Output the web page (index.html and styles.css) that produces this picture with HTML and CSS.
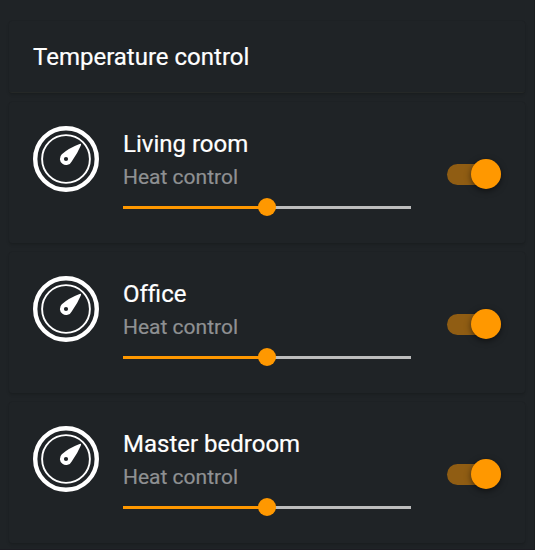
FILE: index.html
```html
<!DOCTYPE html>
<html lang="en">
<head>
<meta charset="utf-8">
<title>Temperature control</title>
<link rel="stylesheet" href="styles.css">
</head>
<body>
<svg class="defs" aria-hidden="true">
  <symbol id="gauge" viewBox="0 0 66 66">
    <circle cx="33" cy="33" r="30.8" fill="none" stroke="#fff" stroke-width="4.4"/>
    <circle cx="33" cy="33" r="23.9" fill="none" stroke="#fff" stroke-width="1.9"/>
    <path fill="#fff" fill-rule="evenodd" d="M47.9 17.9C48.3 18.4 48 19 47.7 19.8Q44.6 27.4 38.7 35.4A6.2 6.2 0 1 1 28.8 28.3Q35.4 22.2 46 18.2C46.8 17.9 47.4 17.5 47.9 17.9ZM33 30.9A2.1 2.1 0 1 0 33 35.1A2.1 2.1 0 1 0 33 30.9Z"/>
  </symbol>
</svg>
<main class="panel">
  <header class="card header"><h1 class="title">Temperature control</h1></header>
  <section class="card room">
    <svg class="icon"><use href="#gauge"/></svg>
    <div class="info">
      <h2 class="title">Living room</h2>
      <p class="subtitle">Heat control</p>
      <div class="slider"><span class="thumb"></span></div>
    </div>
    <div class="switch"><span class="knob"></span></div>
  </section>
  <section class="card room">
    <svg class="icon"><use href="#gauge"/></svg>
    <div class="info">
      <h2 class="title">Of&zwnj;fice</h2>
      <p class="subtitle">Heat control</p>
      <div class="slider"><span class="thumb"></span></div>
    </div>
    <div class="switch"><span class="knob"></span></div>
  </section>
  <section class="card room">
    <svg class="icon"><use href="#gauge"/></svg>
    <div class="info">
      <h2 class="title">Master bedroom</h2>
      <p class="subtitle">Heat control</p>
      <div class="slider"><span class="thumb"></span></div>
    </div>
    <div class="switch"><span class="knob"></span></div>
  </section>
</main>
</body>
</html>
```
FILE: styles.css
```css
* { box-sizing: border-box; }
body {
  margin: 0;
  height: 550px;
  overflow: hidden;
  background: #1f2326;
  font-family: Roboto, sans-serif;
  border-right: 1px solid #1b1e20;
  border-bottom: 1px solid #1c1c22;
}
.defs { display: block; width: 0; height: 0; }
.panel {
  display: flex;
  flex-direction: column;
  gap: 9px;
  width: 535px;
  padding: 21px 10px 0 9px;
}
.card {
  background: #1f2326;
  border-radius: 3px;
  box-shadow: 0 2px 3px rgba(0, 0, 0, .13), 0 0 1px rgba(0, 0, 0, .12);
}
.header {
  height: 72px;
  padding: 21px 24px 0;
  border-bottom: 1px solid #252827;
}
.title {
  margin: 0;
  font-size: 24px;
  line-height: 30px;
  font-weight: 400;
  color: #fff;
  -webkit-text-stroke: .2px;
}
.room {
  display: flex;
  align-items: flex-start;
  height: 141px;
  padding: 24px;
}
.icon { flex: none; width: 66px; height: 66px; }
.info { width: 288px; margin-left: 24px; padding-top: 3px; }
.subtitle {
  margin: 3px 0 0;
  font-size: 21px;
  line-height: 30px;
  color: #8f9193;
  -webkit-text-stroke: .2px;
}
.slider {
  display: flex;
  align-items: center;
  justify-content: center;
  height: 18px;
  margin-top: 6px;
  background: linear-gradient(90deg, #ff9800 50%, #bdbdbd 50%) center / 100% 3px no-repeat;
}
.thumb { width: 18px; height: 18px; border-radius: 50%; background: #ff9800; }
.switch {
  display: flex;
  align-items: flex-start;
  justify-content: flex-end;
  width: 54px;
  height: 21px;
  margin: 38px 0 0 36px;
  background: #905d13;
  border-radius: 11px;
}
.knob {
  flex: none;
  width: 30px;
  height: 30px;
  margin-top: -5px;
  border-radius: 50%;
  background: #ff9800;
  box-shadow: 0 2px 6px rgba(0, 0, 0, .5);
}
```
